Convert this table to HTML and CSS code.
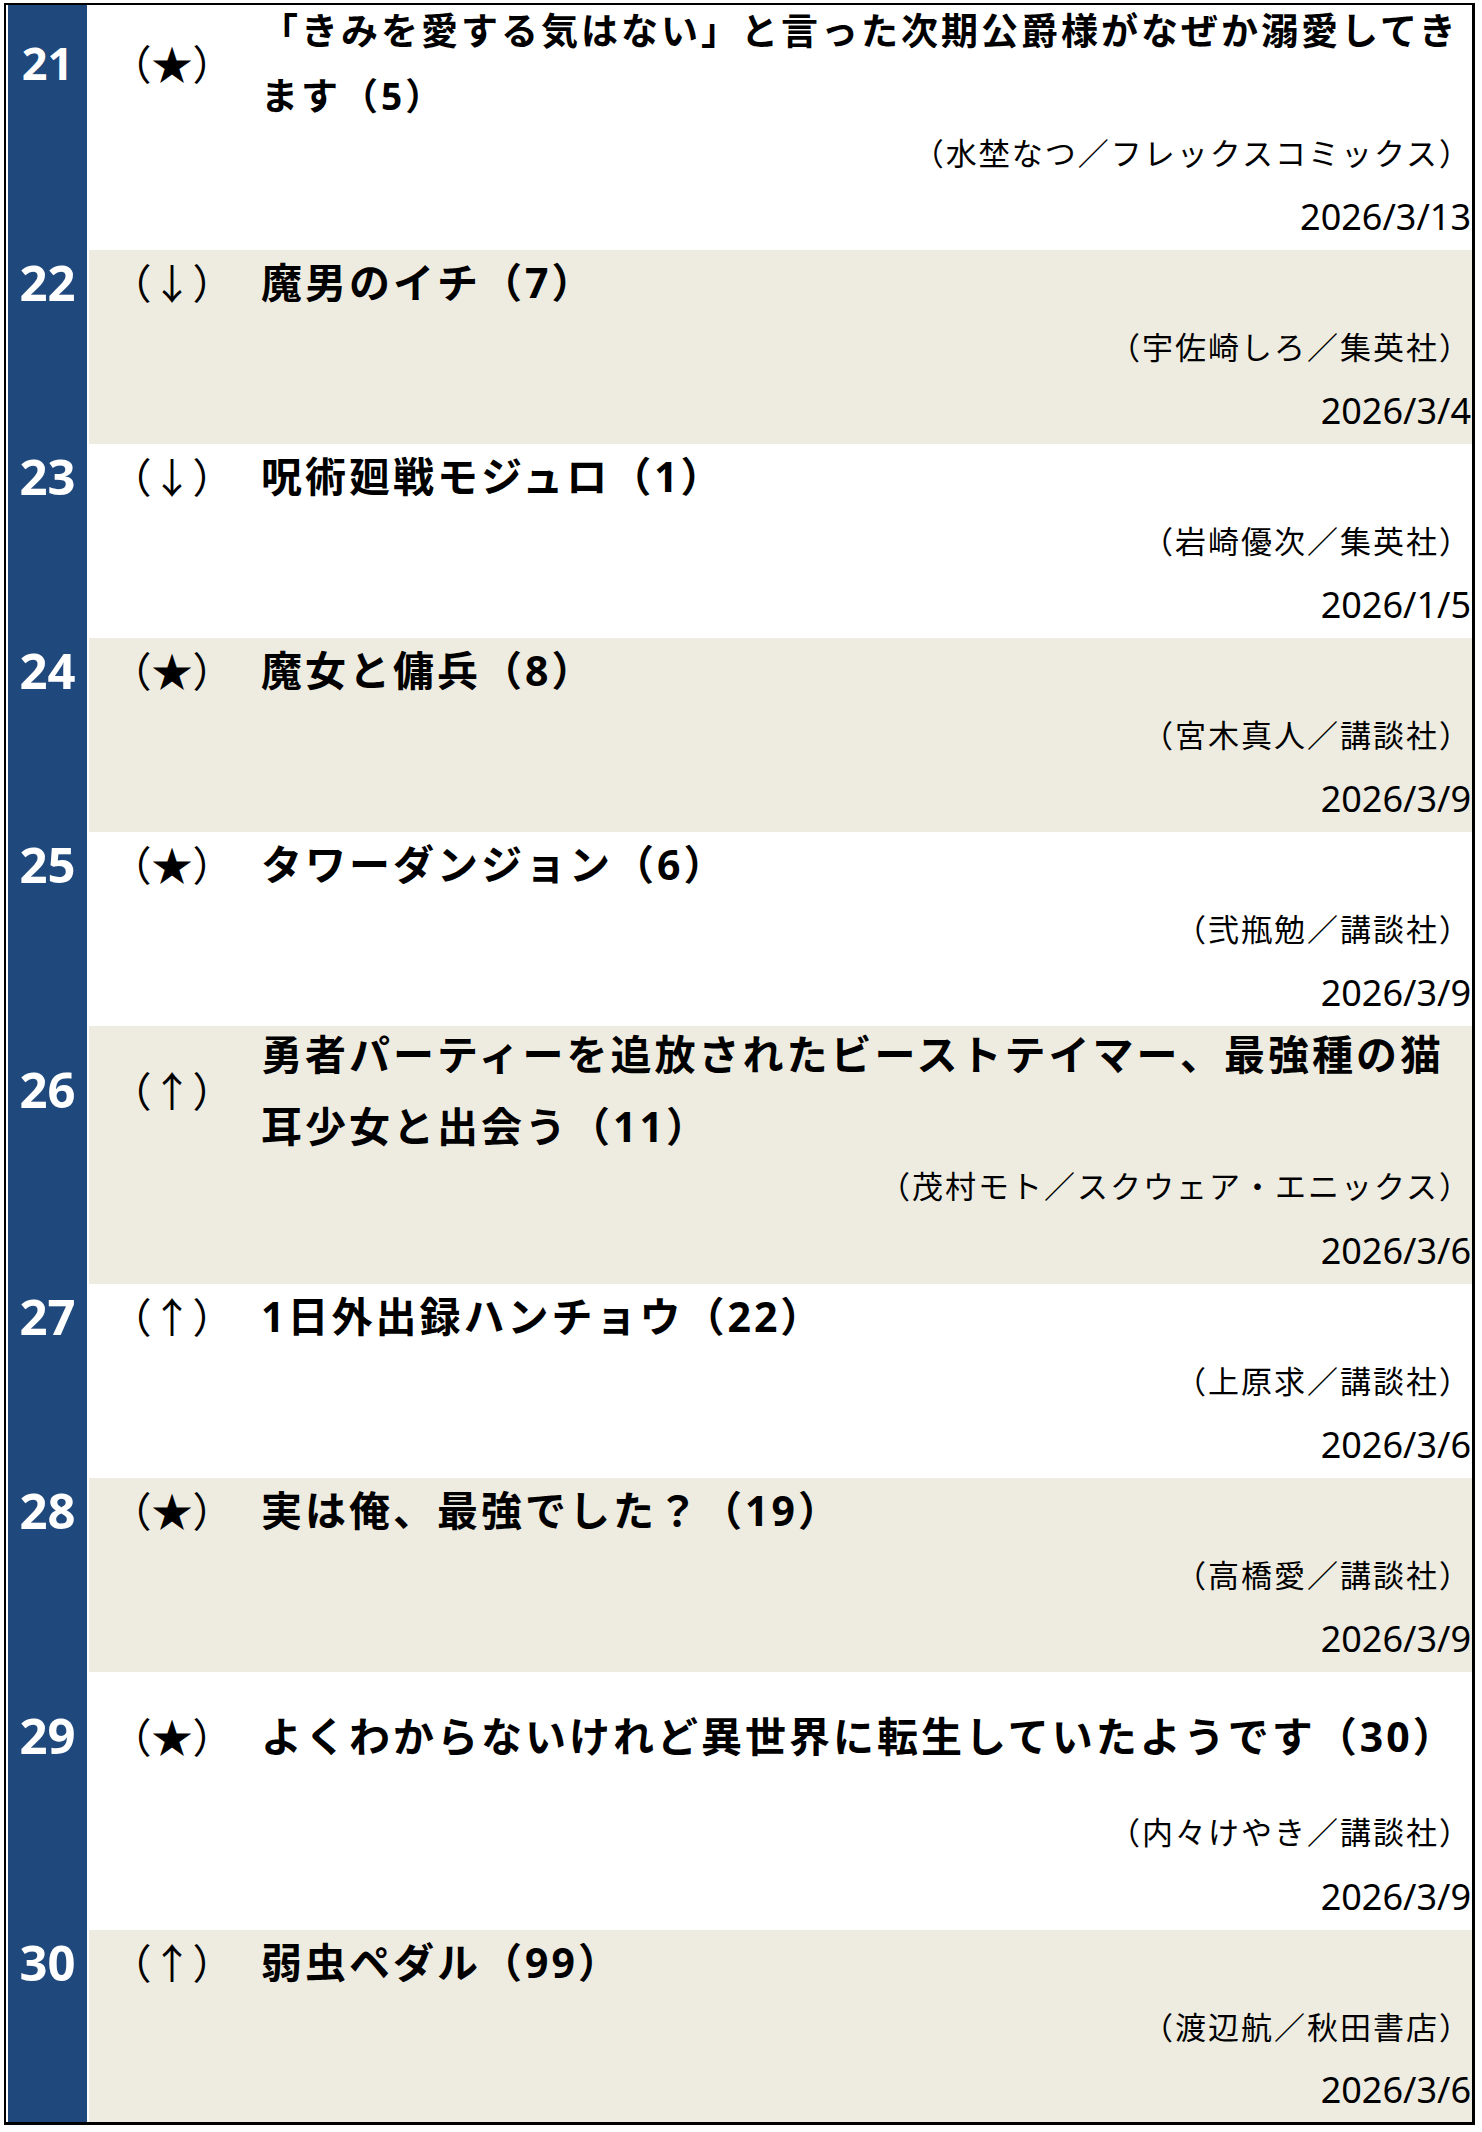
FILE: index.html
```html
<!DOCTYPE html>
<html lang="ja">
<head>
<meta charset="utf-8">
<title>ランキング 21-30</title>
<link rel="stylesheet" href="styles.css">
</head>
<body>
<div class="board">
  <div class="entry entry--two">
    <div class="strip"></div>
    <div class="rank rank--small">21</div>
    <div class="move">（★）</div>
    <div class="title title--small">「きみを愛する気はない」と言った次期公爵様がなぜか溺愛してき<br>ます（5）</div>
    <div class="author">（水埜なつ／フレックスコミックス）</div>
    <div class="date">2026/3/13</div>
  </div>
  <div class="entry entry--alt">
    <div class="strip"></div>
    <div class="rank">22</div>
    <div class="move">（↓）</div>
    <div class="title">魔男のイチ（7）</div>
    <div class="author">（宇佐崎しろ／集英社）</div>
    <div class="date">2026/3/4</div>
  </div>
  <div class="entry">
    <div class="strip"></div>
    <div class="rank">23</div>
    <div class="move">（↓）</div>
    <div class="title">呪術廻戦モジュロ（1）</div>
    <div class="author">（岩崎優次／集英社）</div>
    <div class="date">2026/1/5</div>
  </div>
  <div class="entry entry--alt">
    <div class="strip"></div>
    <div class="rank">24</div>
    <div class="move">（★）</div>
    <div class="title">魔女と傭兵（8）</div>
    <div class="author">（宮木真人／講談社）</div>
    <div class="date">2026/3/9</div>
  </div>
  <div class="entry">
    <div class="strip"></div>
    <div class="rank">25</div>
    <div class="move">（★）</div>
    <div class="title">タワーダンジョン（6）</div>
    <div class="author">（弐瓶勉／講談社）</div>
    <div class="date">2026/3/9</div>
  </div>
  <div class="entry entry--alt entry--tall">
    <div class="strip"></div>
    <div class="rank">26</div>
    <div class="move">（↑）</div>
    <div class="title title--wrap">勇者パーティーを追放されたビーストテイマー、最強種の猫<br>耳少女と出会う（11）</div>
    <div class="author">（茂村モト／スクウェア・エニックス）</div>
    <div class="date">2026/3/6</div>
  </div>
  <div class="entry">
    <div class="strip"></div>
    <div class="rank">27</div>
    <div class="move">（↑）</div>
    <div class="title">1日外出録ハンチョウ（22）</div>
    <div class="author">（上原求／講談社）</div>
    <div class="date">2026/3/6</div>
  </div>
  <div class="entry entry--alt">
    <div class="strip"></div>
    <div class="rank">28</div>
    <div class="move">（★）</div>
    <div class="title">実は俺、最強でした？（19）</div>
    <div class="author">（高橋愛／講談社）</div>
    <div class="date">2026/3/9</div>
  </div>
  <div class="entry entry--tall">
    <div class="strip"></div>
    <div class="rank">29</div>
    <div class="move">（★）</div>
    <div class="title">よくわからないけれど異世界に転生していたようです（30）</div>
    <div class="author">（内々けやき／講談社）</div>
    <div class="date">2026/3/9</div>
  </div>
  <div class="entry entry--alt entry--last">
    <div class="strip"></div>
    <div class="rank">30</div>
    <div class="move">（↑）</div>
    <div class="title">弱虫ペダル（99）</div>
    <div class="author">（渡辺航／秋田書店）</div>
    <div class="date">2026/3/6</div>
  </div>
</div>
</body>
</html>
```

FILE: styles.css
```css
html, body {
  margin: 0;
  padding: 0;
  background: #ffffff;
}

body {
  font-family: "Noto Sans CJK JP", "Noto Sans", sans-serif;
  color: #000000;
}

.board {
  box-sizing: border-box;
  width: 1471px;
  margin: 3px 0 0 4px;
  border-top: 2px solid #000;
  border-left: 2px solid #000;
  border-right: 3px solid #000;
  border-bottom: 3px solid #000;
  padding-left: 2px;
  background: #ffffff;
}

.entry {
  display: grid;
  grid-template-columns: 81px 172px 1fr;
  grid-template-rows: 64px 64px 66px;
  background: #ffffff;
}

.entry--alt {
  background: #eeece1;
}

.entry--two {
  grid-template-rows: 115px 64px 66px;
}

.entry--tall {
  grid-template-rows: 127px 64px 67px;
}

.entry--last {
  grid-template-rows: 64px 64px 64px;
}

.strip {
  grid-column: 1;
  grid-row: 1 / -1;
  background: #1f497d;
  border-right: 2px solid #ffffff;
}

.rank {
  grid-column: 1;
  grid-row: 1;
  align-self: center;
  text-align: center;
  padding-right: 2px;
  color: #ffffff;
  font-family: "Noto Sans", "Noto Sans CJK JP", sans-serif;
  font-weight: 700;
  font-size: 49px;
  line-height: 1;
}

.rank--small {
  font-size: 45px;
}

.move {
  grid-column: 2;
  grid-row: 1;
  align-self: center;
  text-align: center;
  padding-right: 6px;
  font-family: "Noto Sans CJK JP", sans-serif;
  font-weight: 400;
  font-size: 41px;
  line-height: 1.2;
  white-space: nowrap;
}

.title {
  grid-column: 3;
  grid-row: 1;
  align-self: center;
  font-family: "Noto Sans", "Noto Sans CJK JP", sans-serif;
  font-weight: 700;
  font-size: 41px;
  letter-spacing: 3px;
  line-height: 64px;
  white-space: nowrap;
}

.title--small {
  font-size: 37px;
  line-height: 65px;
}

.title--wrap {
  line-height: 72px;
}

.author {
  grid-column: 2 / 4;
  grid-row: 2;
  align-self: center;
  text-align: right;
  font-family: "Noto Sans CJK JP", sans-serif;
  font-weight: 400;
  font-size: 31px;
  letter-spacing: 2px;
  line-height: 64px;
  white-space: nowrap;
}

.date {
  grid-column: 2 / 4;
  grid-row: 3;
  align-self: center;
  text-align: right;
  padding-right: 1px;
  font-family: "Noto Sans", "Noto Sans CJK JP", sans-serif;
  font-weight: 400;
  font-size: 36px;
  line-height: 64px;
  white-space: nowrap;
}
```
